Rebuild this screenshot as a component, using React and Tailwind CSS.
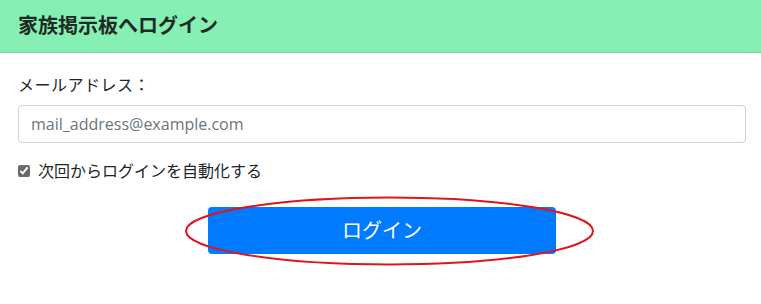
export default function App() {
  return (
    <div
      className="w-[761px] h-[304px] bg-white text-[#212529] relative overflow-hidden"
      style={{ fontFamily: '"Open Sans", "Noto Sans CJK JP", sans-serif' }}
    >
      <div className="h-[53px] bg-[#86f0b4] border-b border-[#77d6a0] flex items-center px-[18px]">
        <h1 className="text-[20px] font-bold text-[#1f2a24] leading-none">家族掲示板へログイン</h1>
      </div>

      <div className="px-[18px] pt-[22px]">
        <label className="block text-[16px] leading-[20px] tracking-[0.5px]">メールアドレス：</label>
        <input
          type="email"
          placeholder="mail_address@example.com"
          className="mt-[10px] w-[728px] h-[38px] border border-[#ced4da] rounded-[4px] px-[12px] text-[16px] placeholder-[#6c757d] outline-none"
        />
        <label className="mt-[18px] flex items-center gap-[8px] text-[16px] leading-[20px]">
          <input type="checkbox" defaultChecked className="w-[12px] h-[12px] accent-[#6b6b6b]" />
          次回からログインを自動化する
        </label>
        <div className="mt-[26px] flex">
          <button className="ml-[190px] w-[348px] h-[47px] bg-[#007bff] text-white text-[20px] rounded-[4px]">
            ログイン
          </button>
        </div>
      </div>

      <svg className="absolute left-0 top-0 pointer-events-none" width="761" height="304">
        <ellipse cx="389.5" cy="231" rx="203.5" ry="33.5" fill="none" stroke="#e0141c" strokeWidth="2" />
      </svg>
    </div>
  )
}
